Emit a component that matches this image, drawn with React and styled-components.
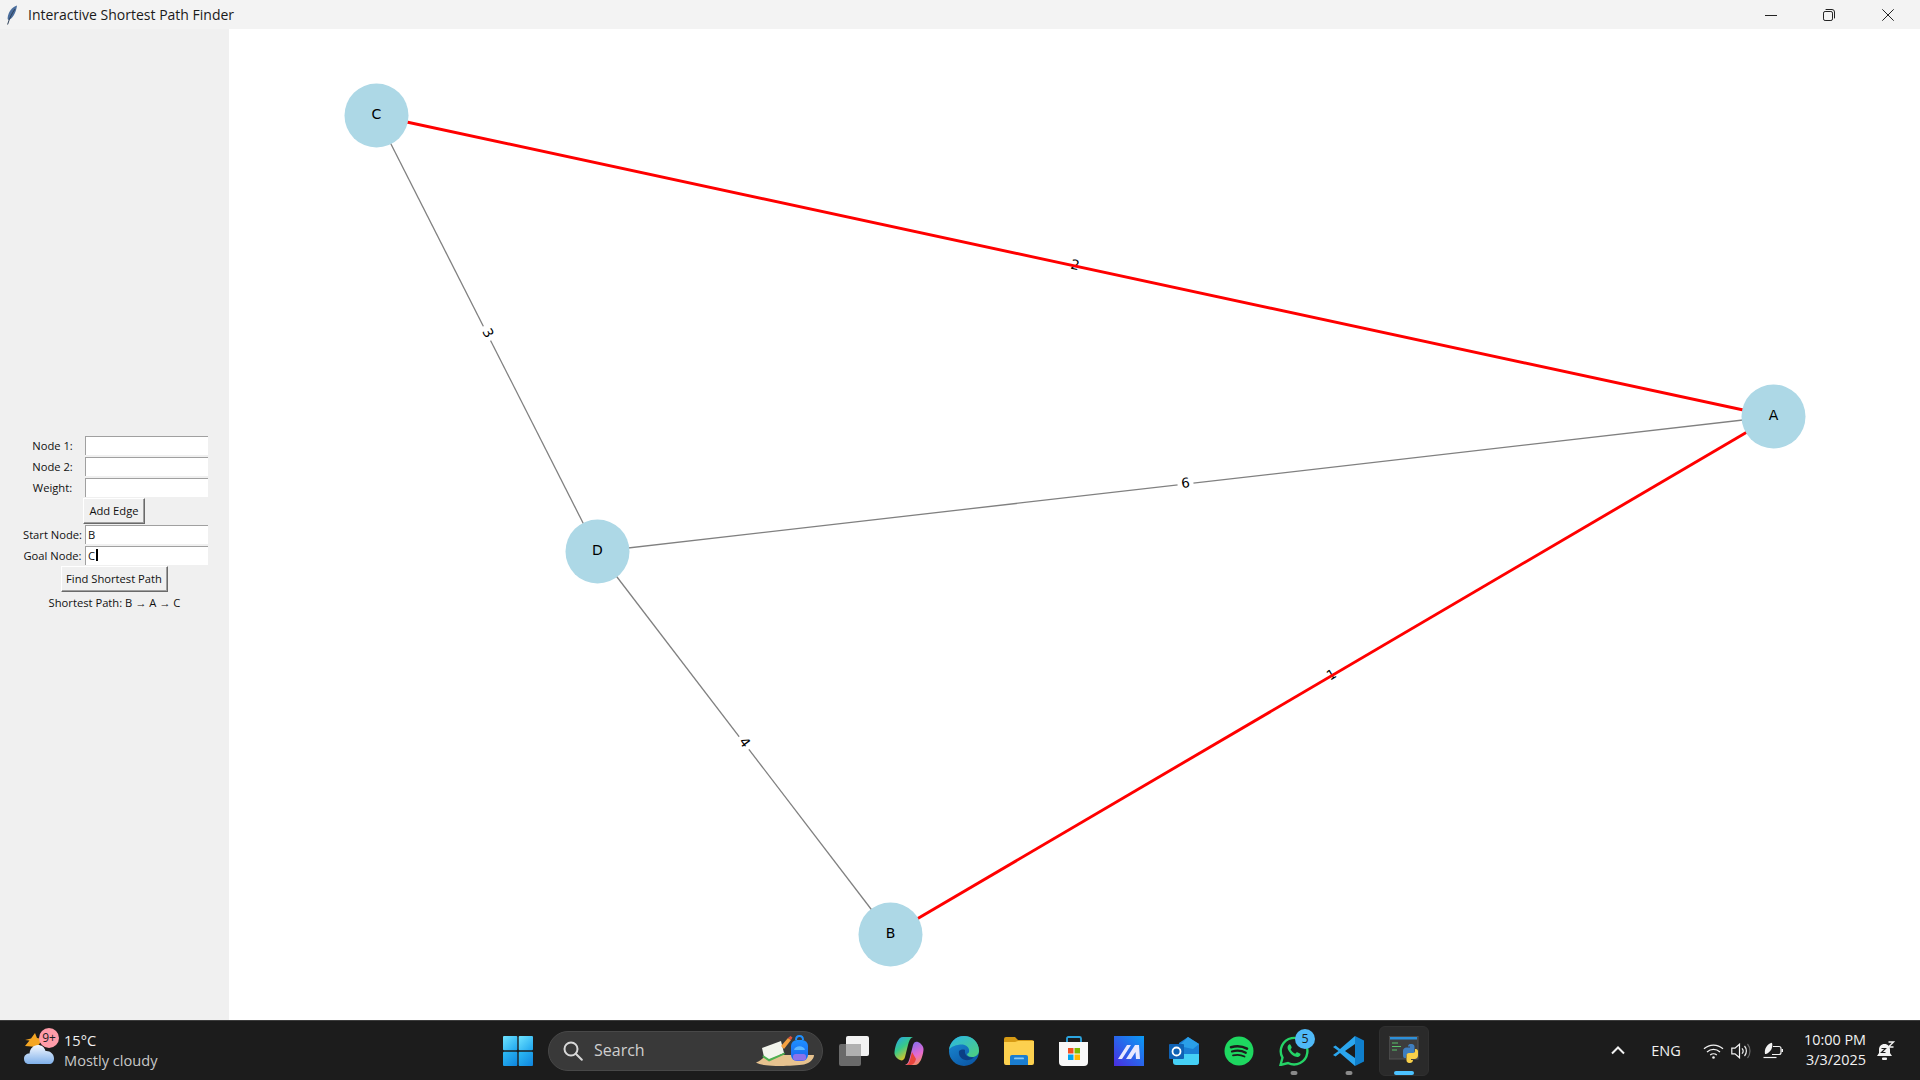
import React from 'react';
import styled, { createGlobalStyle } from 'styled-components';

const GlobalStyle = createGlobalStyle`
  html, body {
    margin: 0;
    padding: 0;
    width: 1920px;
    height: 1080px;
    overflow: hidden;
    font-family: "Open Sans", "Liberation Sans", sans-serif;
  }
`;

const Screen = styled.div`
  display: flex;
  flex-direction: column;
  width: 1920px;
  height: 1080px;
  background: #fff;
`;

const TitleBar = styled.div`
  display: flex;
  align-items: center;
  flex: 0 0 29px;
  padding-right: 3px;
  background: #f3f3f3;
`;

const AppGlyph = styled.div`
  display: flex;
  width: 28px;
  padding-left: 6px;
  box-sizing: border-box;
`;

const TitleText = styled.div`
  font-size: 14px;
  color: #1a1a1a;
  white-space: nowrap;
`;

const CaptionButtons = styled.div`
  display: flex;
  margin-left: auto;
`;

const CaptionButton = styled.div`
  display: flex;
  align-items: center;
  justify-content: center;
  width: 58.5px;
  height: 29px;
`;

const Main = styled.div`
  display: flex;
  flex: 1;
  min-height: 0;
`;

const Sidebar = styled.div`
  display: flex;
  flex-direction: column;
  justify-content: center;
  flex: 0 0 229px;
  background: #f0f0f0;
  font-size: 11.2px;
  color: #111;
`;

const Field = styled.div`
  display: grid;
  grid-template-columns: 59px 123px;
  column-gap: 3px;
  align-items: center;
  height: 19px;
  padding-left: 23px;
  margin-bottom: ${p => p.$gap ?? 2}px;
`;

const FieldLabel = styled.div`
  padding-bottom: ${p => p.$lift ?? 0}px;
  text-align: center;
  white-space: nowrap;
`;

const Entry = styled.div`
  display: flex;
  align-items: center;
  height: 19px;
  box-sizing: border-box;
  padding: 0 0 2px 2px;
  background: #fff;
  border-top: 1px solid #a0a0a0;
  border-left: 1px solid #a0a0a0;
`;

const Caret = styled.span`
  display: inline-block;
  width: 2px;
  height: 12px;
  margin-left: 1px;
  background: #000;
`;

const PushButton = styled.div`
  align-self: center;
  display: flex;
  align-items: center;
  justify-content: center;
  width: ${p => p.$w}px;
  height: 26px;
  margin-right: 1px;
  margin-top: ${p => p.$top ?? 0}px;
  margin-bottom: ${p => p.$bottom ?? 0}px;
  padding-bottom: 2px;
  box-sizing: border-box;
  background: #f0f0f0;
  border: 1px solid;
  border-color: #fff #6a6a6a #6a6a6a #fff;
  box-shadow: inset -1px -1px 0 #a0a0a0;
  white-space: nowrap;
`;

const ResultLabel = styled.div`
  height: 19px;
  line-height: 17px;
  margin-top: 2px;
  text-align: center;
  white-space: nowrap;
`;

const Canvas = styled.div`
  flex: 1;
  min-width: 0;
  background: #fff;
`;

const GraphSvg = styled.svg`
  display: block;
  width: 100%;
  height: 100%;
`;

const EdgeLabelText = styled.text`
  font-family: "DejaVu Sans", sans-serif;
  font-size: 13.5px;
  fill: #000;
  text-anchor: middle;
  dominant-baseline: central;
`;

const NodeLabelText = styled(EdgeLabelText)`
  font-size: 14px;
`;

const Taskbar = styled.div`
  display: flex;
  align-items: center;
  flex: 0 0 60px;
  box-sizing: border-box;
  background: #1c1c1c;
  border-top: 1px solid #3c3c3c;
`;

const Weather = styled.div`
  display: flex;
  align-items: center;
  flex: 0 0 490px;
  box-sizing: border-box;
  padding-left: 24px;
  gap: 9px;
`;

const WeatherIcon = styled.div`
  position: relative;
  width: 31px;
  height: 36px;
`;

const AlertBadge = styled.div`
  position: absolute;
  top: -5px;
  left: 15px;
  display: flex;
  align-items: center;
  justify-content: center;
  width: 20px;
  height: 20px;
  border-radius: 50%;
  background: #ff9ca9;
  color: #1c1c1c;
  font-size: 12px;
`;

const WeatherText = styled.div`
  display: flex;
  flex-direction: column;
  padding-bottom: 2px;
  font-size: 14.6px;
  line-height: 20px;
  white-space: nowrap;
`;

const Temperature = styled.div`
  color: #f2f2f2;
`;

const Condition = styled.div`
  color: #c8c8c8;
`;

const TaskIcons = styled.div`
  display: flex;
  align-items: center;
`;

const IconSlot = styled.div`
  position: relative;
  display: flex;
  align-items: center;
  justify-content: center;
  flex: 0 0 ${p => p.$w ?? 55}px;
  height: 50px;
  margin-left: ${p => p.$left ?? 0}px;
  box-sizing: border-box;
  border-radius: 6px;
  background: ${p => (p.$active ? '#2a2a2a' : 'transparent')};
  border: 1px solid ${p => (p.$active ? '#303030' : 'transparent')};
`;

const RunDot = styled.div`
  position: absolute;
  bottom: 0;
  left: 50%;
  transform: translateX(-50%);
  width: ${p => (p.$active ? 20 : 7)}px;
  height: 3.5px;
  border-radius: 2px;
  background: ${p => (p.$active ? '#4cc2ff' : '#8a8a8a')};
`;

const CountBadge = styled.div`
  position: absolute;
  top: 2px;
  right: 5px;
  display: flex;
  align-items: center;
  justify-content: center;
  width: 20px;
  height: 20px;
  border-radius: 50%;
  background: #4fb9f7;
  color: #1c1c1c;
  font-size: 12.5px;
`;

const SearchBox = styled.div`
  display: flex;
  align-items: center;
  flex: 0 0 275px;
  height: 40px;
  margin: 0 3px;
  padding: 0 8px 0 14px;
  box-sizing: border-box;
  border-radius: 20px;
  background: #393939;
  border: 1px solid #484848;
`;

const SearchText = styled.div`
  margin-left: 11px;
  padding-bottom: 1px;
  font-size: 16px;
  color: #cfcfcf;
`;

const SearchArt = styled.div`
  display: flex;
  margin-left: auto;
`;

const Tray = styled.div`
  display: flex;
  align-items: center;
  margin-left: auto;
  padding-right: 21px;
  color: #f2f2f2;
`;

const TraySlot = styled.div`
  display: flex;
  align-items: center;
  justify-content: center;
  flex: 0 0 ${p => p.$w}px;
  margin-left: ${p => p.$left ?? 0}px;
`;

const LangText = styled.div`
  font-size: 14.5px;
`;

const Clock = styled.div`
  flex: 0 0 79px;
  padding-bottom: 2px;
  font-size: 14.4px;
  line-height: 20px;
  text-align: right;
  white-space: nowrap;
`;

const nodes = {
  A: [1773.5, 416.5],
  B: [890.5, 934.5],
  C: [376.5, 115.5],
  D: [597.5, 551.5],
};

const grayEdges = [
  ['C', 'D', '3'],
  ['D', 'A', '6'],
  ['D', 'B', '4'],
];

const redEdges = [
  ['C', 'A', '2'],
  ['B', 'A', '1'],
];

function labelPlace(from, to) {
  const [x1, y1] = nodes[from];
  const [x2, y2] = nodes[to];
  const x = (x1 + x2) / 2;
  const y = (y1 + y2) / 2;
  const angle = (Math.atan2(y2 - y1, x2 - x1) * 180) / Math.PI;
  return { x, y, angle };
}

const EdgeLine = ({ from, to, color, width }) => (
  <line
    x1={nodes[from][0]}
    y1={nodes[from][1]}
    x2={nodes[to][0]}
    y2={nodes[to][1]}
    stroke={color}
    strokeWidth={width}
  />
);

const EdgeLabel = ({ from, to, text, plate }) => {
  const { x, y, angle } = labelPlace(from, to);
  return (
    <g transform={`translate(${x} ${y}) rotate(${angle})`}>
      {plate && <rect x="-8" y="-9" width="16" height="16" fill="#fff" />}
      <EdgeLabelText x="0" y="-1.5">{text}</EdgeLabelText>
    </g>
  );
};

const Graph = () => (
  <GraphSvg viewBox="229 29 1691 991">
    {grayEdges.map(([a, b]) => (
      <EdgeLine key={a + b} from={a} to={b} color="#808080" width="1.3" />
    ))}
    {grayEdges.map(([a, b, w]) => (
      <EdgeLabel key={a + b} from={a} to={b} text={w} plate />
    ))}
    {redEdges.map(([a, b, w]) => (
      <EdgeLabel key={a + b} from={a} to={b} text={w} />
    ))}
    {redEdges.map(([a, b]) => (
      <EdgeLine key={a + b} from={a} to={b} color="#ff0000" width="2.9" />
    ))}
    {Object.entries(nodes).map(([name, [x, y]]) => (
      <g key={name}>
        <circle cx={x} cy={y} r="32" fill="#add8e6" />
        <NodeLabelText x={x} y={y - 2}>{name}</NodeLabelText>
      </g>
    ))}
  </GraphSvg>
);

const Feather = () => (
  <svg width="12" height="20" viewBox="0 0 12 20">
    <path d="M11 0.5C6 2 2.2 7 1.6 13c-.1 1.2.3 1.8 1 2 4-1.5 7.4-7 8.4-14.5z" fill="#4a6d9c" />
    <path d="M9 4C6 8 3.6 13 1.6 19.5" stroke="#2d3f57" strokeWidth="1" fill="none" />
  </svg>
);

const MinimizeGlyph = () => (
  <svg width="12" height="12" viewBox="0 0 12 12">
    <path d="M0 6.5h12" stroke="#222" strokeWidth="1" />
  </svg>
);

const RestoreGlyph = () => (
  <svg width="12" height="12" viewBox="0 0 12 12" fill="none" stroke="#222" strokeWidth="1">
    <rect x="0.5" y="2.5" width="9" height="9" rx="1.6" />
    <path d="M2.6 0.5h6.4a2.5 2.5 0 0 1 2.5 2.5v6.4" />
  </svg>
);

const CloseGlyph = () => (
  <svg width="12" height="12" viewBox="0 0 12 12">
    <path d="M0.3 0.3l11.4 11.4M11.7 0.3L0.3 11.7" stroke="#222" strokeWidth="1" />
  </svg>
);

const WeatherGlyph = () => (
  <svg width="31" height="36" viewBox="0 0 31 36">
    <defs>
      <linearGradient id="cloudFill" x1="0" y1="0" x2="0" y2="1">
        <stop offset="0" stopColor="#f4f8ff" />
        <stop offset="1" stopColor="#7fb0ea" />
      </linearGradient>
    </defs>
    <path d="M11 0l2 5 6 1-6 8-12-1 4.500-5.500L1 7l6-1.500z" fill="#f5a623" />
    <path d="M5 31c-3.500 0-5-2.500-5-5.500 0-3 2.500-5 5.500-5 .5-5 4-8.500 8.500-8.500 3.500 0 6.500 2 7.500 6C26 17.500 30 21 30 25.500c0 3.500-2 5.500-5 5.500z" fill="url(#cloudFill)" />
  </svg>
);

const WindowsLogo = () => (
  <svg width="30" height="30" viewBox="0 0 30 30">
    <defs>
      <linearGradient id="winTop" x1="0" y1="0" x2="1" y2="1">
        <stop offset="0" stopColor="#6fe4ff" />
        <stop offset="1" stopColor="#1ea5ee" />
      </linearGradient>
      <linearGradient id="winLow" x1="0" y1="0" x2="1" y2="1">
        <stop offset="0" stopColor="#2dbcf5" />
        <stop offset="1" stopColor="#0f84dd" />
      </linearGradient>
    </defs>
    <rect x="0" y="0" width="14.300" height="14.300" rx="1" fill="url(#winTop)" />
    <rect x="15.700" y="0" width="14.300" height="14.300" rx="1" fill="url(#winTop)" />
    <rect x="0" y="15.700" width="14.300" height="14.300" rx="1" fill="url(#winLow)" />
    <rect x="15.700" y="15.700" width="14.300" height="14.300" rx="1" fill="url(#winLow)" />
  </svg>
);

const SearchGlyph = () => (
  <svg width="20" height="20" viewBox="0 0 20 20" fill="none" stroke="#d8d8d8" strokeWidth="2">
    <circle cx="8" cy="8" r="6.500" />
    <path d="M12.800 12.800l6 6" strokeLinecap="round" />
  </svg>
);

const SearchDecor = () => (
  <svg width="58" height="31" viewBox="0 0 58 31">
    <defs>
      <linearGradient id="bagFill" x1="0" y1="0" x2="0" y2="1">
        <stop offset="0" stopColor="#1e90ff" />
        <stop offset="1" stopColor="#1a62f0" />
      </linearGradient>
    </defs>
    <path d="M0 27.500C6 26 8 20 14 20h44c0 4-4 8-10 9.500-8 1.500-30 2-38 .8-4-.5-8-1.300-10-2.800z" fill="#e6c28f" />
    <path d="M6 13l19-7 3 12-16 7-4-3z" fill="#f2f4ec" />
    <path d="M7 20l6 4 16-6.500-.5 2-15.500 7-6.500-4.500z" fill="#4caf50" />
    <path d="M25 11l7-8 3 2-7 9z" fill="#f5a040" />
    <path d="M32 3l2.500-2 2 1.500-1.500 2.500z" fill="#e0533d" />
    <rect x="35" y="5" width="17" height="21" rx="6" fill="url(#bagFill)" />
    <path d="M40 5c0-2.500 1.500-4 3.500-4s3.500 1.500 3.500 4" stroke="#1e90ff" strokeWidth="2" fill="none" />
    <rect x="37" y="19" width="13" height="6.500" rx="2.500" fill="#8a72ec" />
    <path d="M38 15c1-5 10-5 11 0z" fill="#5db7ff" />
  </svg>
);

const TaskViewIcon = () => (
  <svg width="30" height="30" viewBox="0 0 30 30">
    <rect x="0" y="8" width="22" height="22" rx="2" fill="#6a6a6a" />
    <rect x="7" y="0" width="23" height="20" rx="2" fill="#f2f2f2" />
    <path d="M7 8h15v12H7z" fill="#b0b0b0" />
  </svg>
);

const CopilotIcon = () => (
  <svg width="30" height="30" viewBox="0 0 30 30">
    <defs>
      <linearGradient id="copA" x1="0" y1="0" x2="0.6" y2="1">
        <stop offset="0" stopColor="#2aa0f0" />
        <stop offset="0.5" stopColor="#36c98a" />
        <stop offset="1" stopColor="#f5c518" />
      </linearGradient>
      <linearGradient id="copB" x1="0.3" y1="0" x2="0.7" y2="1">
        <stop offset="0" stopColor="#7d6df0" />
        <stop offset="0.6" stopColor="#e46ad2" />
        <stop offset="1" stopColor="#f5905a" />
      </linearGradient>
    </defs>
    <path d="M9 1h10c-3 1-4 4-5 8l-3 12c-.7 3-3 4-5 3-2.500-1-6-4-5.500-8C1.300 9 4 1 9 1z" fill="url(#copA)" />
    <path d="M21 29H11c3-1 4-4 5-8l3-12c.7-3 3-4 5-3 2.500 1 6 4 5.500 8-.8 7-3.500 15-8.500 15z" fill="url(#copB)" />
    <path d="M18 16l-2 8c-.7 3-2 5-5 5h6c3-.5 4-3 5-6z" fill="#e8453c" />
  </svg>
);

const EdgeIcon = () => (
  <svg width="30" height="30" viewBox="0 0 30 30">
    <defs>
      <linearGradient id="edgeTop" x1="0" y1="0" x2="1" y2="1">
        <stop offset="0" stopColor="#2ab6e8" />
        <stop offset="1" stopColor="#4fd07a" />
      </linearGradient>
      <linearGradient id="edgeLow" x1="0" y1="0" x2="0.6" y2="1">
        <stop offset="0" stopColor="#1b8fd8" />
        <stop offset="1" stopColor="#0c5aa8" />
      </linearGradient>
    </defs>
    <circle cx="15" cy="15" r="15" fill="url(#edgeLow)" />
    <path d="M0 14C1 6 7 0 15 0c8 0 15 6 15 14.500 0 4-3 6.500-7 6.500-3 0-5-1-5-3 2-1 2.500-2.500 2-4.500C19 9.500 15 8 11 8.500 5 9.500 1.500 11 0 14z" fill="url(#edgeTop)" />
    <path d="M10 15c-1 6 4 10 10 9 2-.3 4-1.500 5-3-2 .5-5 .5-7-1-2.500-2-2-5-2-6-2-1-5 0-6 1z" fill="#0b3f85" />
  </svg>
);

const FolderIcon = () => (
  <svg width="30" height="28" viewBox="0 0 30 28">
    <path d="M0 2a2 2 0 0 1 2-2h9l3 3h14a2 2 0 0 1 2 2v3H0z" fill="#d69a14" />
    <path d="M0 5h11l3-1h16v22a2 2 0 0 1-2 2H2a2 2 0 0 1-2-2z" fill="#fcd04f" />
    <path d="M6 20a2 2 0 0 1 2-2h14a2 2 0 0 1 2 2v8H6z" fill="#1a7dd0" />
    <rect x="10" y="20.500" width="10" height="1.800" rx=".9" fill="#8ccaf2" />
  </svg>
);

const StoreIcon = () => (
  <svg width="30" height="30" viewBox="0 0 30 30">
    <path d="M8 6V2.500C8 1.500 8.500 1 9.500 1h11c1 0 1.500.5 1.500 1.500V6" fill="none" stroke="#2ca5e0" strokeWidth="1.800" />
    <path d="M0 6h29v20a4 4 0 0 1-4 4H4a4 4 0 0 1-4-4z" fill="#f8f8f8" />
    <rect x="9" y="12" width="5.500" height="5.500" fill="#f25022" />
    <rect x="15.500" y="12" width="5.500" height="5.500" fill="#7fba00" />
    <rect x="9" y="18.500" width="5.500" height="5.500" fill="#00a4ef" />
    <rect x="15.500" y="18.500" width="5.500" height="5.500" fill="#ffb900" />
  </svg>
);

const MathIcon = () => (
  <svg width="30" height="30" viewBox="0 0 30 30">
    <defs>
      <linearGradient id="mathBg" x1="0" y1="1" x2="1" y2="0">
        <stop offset="0" stopColor="#4a2de0" />
        <stop offset="1" stopColor="#0a9cf5" />
      </linearGradient>
    </defs>
    <rect width="30" height="30" fill="url(#mathBg)" />
    <path d="M4 23L13 9h4L8 23zM12 23l9-14h4l1 14h-4l-.5-7-4.500 7z" fill="#e8e8ff" />
  </svg>
);

const OutlookIcon = () => (
  <svg width="30" height="30" viewBox="0 0 30 30">
    <path d="M10 7l9-6 11 7v18a3 3 0 0 1-3 3H10z" fill="#1a7fd4" />
    <path d="M19 1l11 7-6 5-14-3z" fill="#2a9fe8" />
    <path d="M4 18h26v8a3 3 0 0 1-3 3H7a3 3 0 0 1-3-3z" fill="#45d0f5" />
    <rect x="0" y="8" width="15" height="15" rx="1" fill="#0f62b5" />
    <circle cx="7.500" cy="15.500" r="4" fill="none" stroke="#fff" strokeWidth="1.800" />
  </svg>
);

const SpotifyIcon = () => (
  <svg width="30" height="30" viewBox="0 0 30 30">
    <circle cx="15" cy="15" r="14.500" fill="#1ed760" />
    <path d="M7 11.200c5.500-1.500 11.500-1 16 1.500" stroke="#1c1c1c" strokeWidth="2.600" fill="none" strokeLinecap="round" />
    <path d="M8 15.500c4.500-1.200 10-.8 13.800 1.300" stroke="#1c1c1c" strokeWidth="2.200" fill="none" strokeLinecap="round" />
    <path d="M9 19.400c4-1 8-.7 11.500 1.100" stroke="#1c1c1c" strokeWidth="1.800" fill="none" strokeLinecap="round" />
  </svg>
);

const WhatsappIcon = () => (
  <svg width="30" height="30" viewBox="0 0 30 30">
    <path d="M1.500 29l2-7.300A13.300 13.300 0 1 1 9 27z" fill="#1c1c1c" stroke="#25d366" strokeWidth="2.400" />
    <path d="M10 8.500c-1.500 1-2 3-.8 5.500 1.500 3 4 5.300 6.800 6.500 2.500 1 4.300.3 5.300-1.300.4-.8.2-1.300-.3-1.600l-2.700-1.300c-.5-.2-.9 0-1.200.4l-.8 1c-2-.8-3.700-2.500-4.700-4.500l.8-.9c.3-.4.400-.8.200-1.200L11.500 8.700c-.3-.6-.9-.7-1.500-.2z" fill="#25d366" />
  </svg>
);

const VsCodeIcon = () => (
  <svg width="31" height="30" viewBox="0 0 31 30">
    <path d="M22 0L7 13 2.500 9.500 0 11l5.500 4L0 19l2.500 1.500L7 17l15 13V22L12 15l10-7z" fill="#2ba6ee" />
    <path d="M22 0l9 4.500v21L22 30z" fill="#0f7fcc" />
  </svg>
);

const PythonTermIcon = () => (
  <svg width="30" height="30" viewBox="0 0 30 30">
    <rect x="0" y="0" width="29" height="23" fill="#3d3d3d" stroke="#555" strokeWidth="1" />
    <rect x="1" y="1" width="27" height="2.500" fill="#2d8fd8" />
    <path d="M3 7h6M3 10.500h9M3 14h5" stroke="#58c26a" strokeWidth="1" />
    <path d="M14 19v-4c0-2 1.500-3.500 3.500-3.500h3.500v-1h-2c0-2 1.500-2.500 3-2.500s3.500.5 3.500 2.500v5c0 1.500-1 2.500-2.500 2.500H19c-1 0-2 1-2 2v2h-1.500c-1 0-1.500-1-1.500-3z" fill="#3f7fc0" />
    <path d="M29 15.500v4c0 2-1.500 3.500-3.500 3.500H22v1h2c0 2-1.500 3-3 3s-3.500-.6-3.500-2.500v-5c0-1.500 1-2.500 2.500-2.500h4c1 0 2-1 2-2v-2H27c1 0 2 1 2 2.500z" fill="#f7cf4a" />
  </svg>
);

const ChevronGlyph = () => (
  <svg width="14" height="9" viewBox="0 0 14 9" fill="none" stroke="#f2f2f2" strokeWidth="2">
    <path d="M1 7.500l6-6 6 6" />
  </svg>
);

const WifiGlyph = () => (
  <svg width="21" height="16" viewBox="0 0 21 16" fill="none" stroke="#f2f2f2" strokeWidth="1.300">
    <path d="M1 5.800C6.500 .8 14.500 .8 20 5.800" />
    <path d="M4 9C7.800 5.600 13.200 5.600 17 9" />
    <path d="M7.200 12C9 10.500 12 10.500 13.800 12" />
    <circle cx="10.500" cy="14.500" r="1.300" fill="#f2f2f2" stroke="none" />
  </svg>
);

const VolumeGlyph = () => (
  <svg width="20" height="16" viewBox="0 0 20 16" fill="none" stroke="#f2f2f2" strokeWidth="1.200">
    <path d="M.8 5.200h3.200L8.500 1.200v13.600L4 10.800H.8z" />
    <path d="M11 5.300c1.300 1.500 1.300 3.900 0 5.400" />
    <path d="M13.500 3c2.500 2.800 2.500 7.200 0 10" />
    <path d="M16.500 1c3.300 4 3.300 10 0 14" stroke="#6a6a6a" />
  </svg>
);

const BatteryGlyph = () => (
  <svg width="21" height="17" viewBox="0 0 21 17" fill="none" stroke="#f2f2f2" strokeWidth="1.200">
    <path d="M10 4.500h6a2 2 0 0 1 2 2v4a2 2 0 0 1-2 2h-7" />
    <path d="M18.500 7v3h1.500V7z" fill="#f2f2f2" stroke="none" />
    <path d="M2 12C1 7 4 2 9 .8c1.200 4.500-1 9.500-6 11.200z" fill="#f2f2f2" stroke="none" />
    <path d="M.5 15.500h13" />
  </svg>
);

const BellGlyph = () => (
  <svg width="20" height="20" viewBox="0 0 20 20">
    <path d="M8.500 3c3.500 0 5.500 2.500 5.500 5.500v3.500l2 3H1l2-3V8.500C3 5.500 5 3 8.500 3z" fill="#f2f2f2" />
    <rect x="6" y="16.500" width="5" height="2.500" rx="1" fill="#f2f2f2" />
    <path d="M5.500 7.500h4l-4 4h4" stroke="#1c1c1c" strokeWidth="1.200" fill="none" />
    <path d="M12.500 1h5l-5 5h5" stroke="#f2f2f2" strokeWidth="1.400" fill="#1c1c1c" />
  </svg>
);

const taskApps = [
  { id: 'folder', icon: <FolderIcon /> },
  { id: 'store', icon: <StoreIcon /> },
  { id: 'math', icon: <MathIcon /> },
  { id: 'outlook', icon: <OutlookIcon /> },
  { id: 'spotify', icon: <SpotifyIcon /> },
];

const App = () => (
  <Screen>
    <GlobalStyle />
    <TitleBar>
      <AppGlyph><Feather /></AppGlyph>
      <TitleText>Interactive Shortest Path Finder</TitleText>
      <CaptionButtons>
        <CaptionButton><MinimizeGlyph /></CaptionButton>
        <CaptionButton><RestoreGlyph /></CaptionButton>
        <CaptionButton><CloseGlyph /></CaptionButton>
      </CaptionButtons>
    </TitleBar>

    <Main>
      <Sidebar>
        <Field><FieldLabel>Node 1:</FieldLabel><Entry /></Field>
        <Field><FieldLabel>Node 2:</FieldLabel><Entry /></Field>
        <Field $gap={1}><FieldLabel>Weight:</FieldLabel><Entry /></Field>
        <PushButton $w={62} $bottom={1}>Add Edge</PushButton>
        <Field><FieldLabel $lift={1}>Start Node:</FieldLabel><Entry>B</Entry></Field>
        <Field $gap={1}><FieldLabel $lift={1}>Goal Node:</FieldLabel><Entry>C<Caret /></Entry></Field>
        <PushButton $w={107}>Find Shortest Path</PushButton>
        <ResultLabel>Shortest Path: B → A → C</ResultLabel>
      </Sidebar>
      <Canvas><Graph /></Canvas>
    </Main>

    <Taskbar>
      <Weather>
        <WeatherIcon>
          <WeatherGlyph />
          <AlertBadge>9+</AlertBadge>
        </WeatherIcon>
        <WeatherText>
          <Temperature>15°C</Temperature>
          <Condition>Mostly cloudy</Condition>
        </WeatherText>
      </Weather>

      <TaskIcons>
        <IconSlot><WindowsLogo /></IconSlot>
        <SearchBox>
          <SearchGlyph />
          <SearchText>Search</SearchText>
          <SearchArt><SearchDecor /></SearchArt>
        </SearchBox>
        <IconSlot><TaskViewIcon /></IconSlot>
        <IconSlot><CopilotIcon /></IconSlot>
        <IconSlot><EdgeIcon /></IconSlot>
        {taskApps.map(app => (
          <IconSlot key={app.id}>{app.icon}</IconSlot>
        ))}
        <IconSlot>
          <WhatsappIcon />
          <CountBadge>5</CountBadge>
          <RunDot />
        </IconSlot>
        <IconSlot>
          <VsCodeIcon />
          <RunDot />
        </IconSlot>
        <IconSlot $active $w={50} $left={3}>
          <PythonTermIcon />
          <RunDot $active />
        </IconSlot>
      </TaskIcons>

      <Tray>
        <TraySlot $w={36}><ChevronGlyph /></TraySlot>
        <TraySlot $w={60}><LangText>ENG</LangText></TraySlot>
        <TraySlot $w={28} $left={3}><WifiGlyph /></TraySlot>
        <TraySlot $w={28}><VolumeGlyph /></TraySlot>
        <TraySlot $w={28} $left={4}><BatteryGlyph /></TraySlot>
        <Clock>
          <div>10:00 PM</div>
          <div>3/3/2025</div>
        </Clock>
        <TraySlot $w={26} $left={7}><BellGlyph /></TraySlot>
      </Tray>
    </Taskbar>
  </Screen>
);

export default App;
